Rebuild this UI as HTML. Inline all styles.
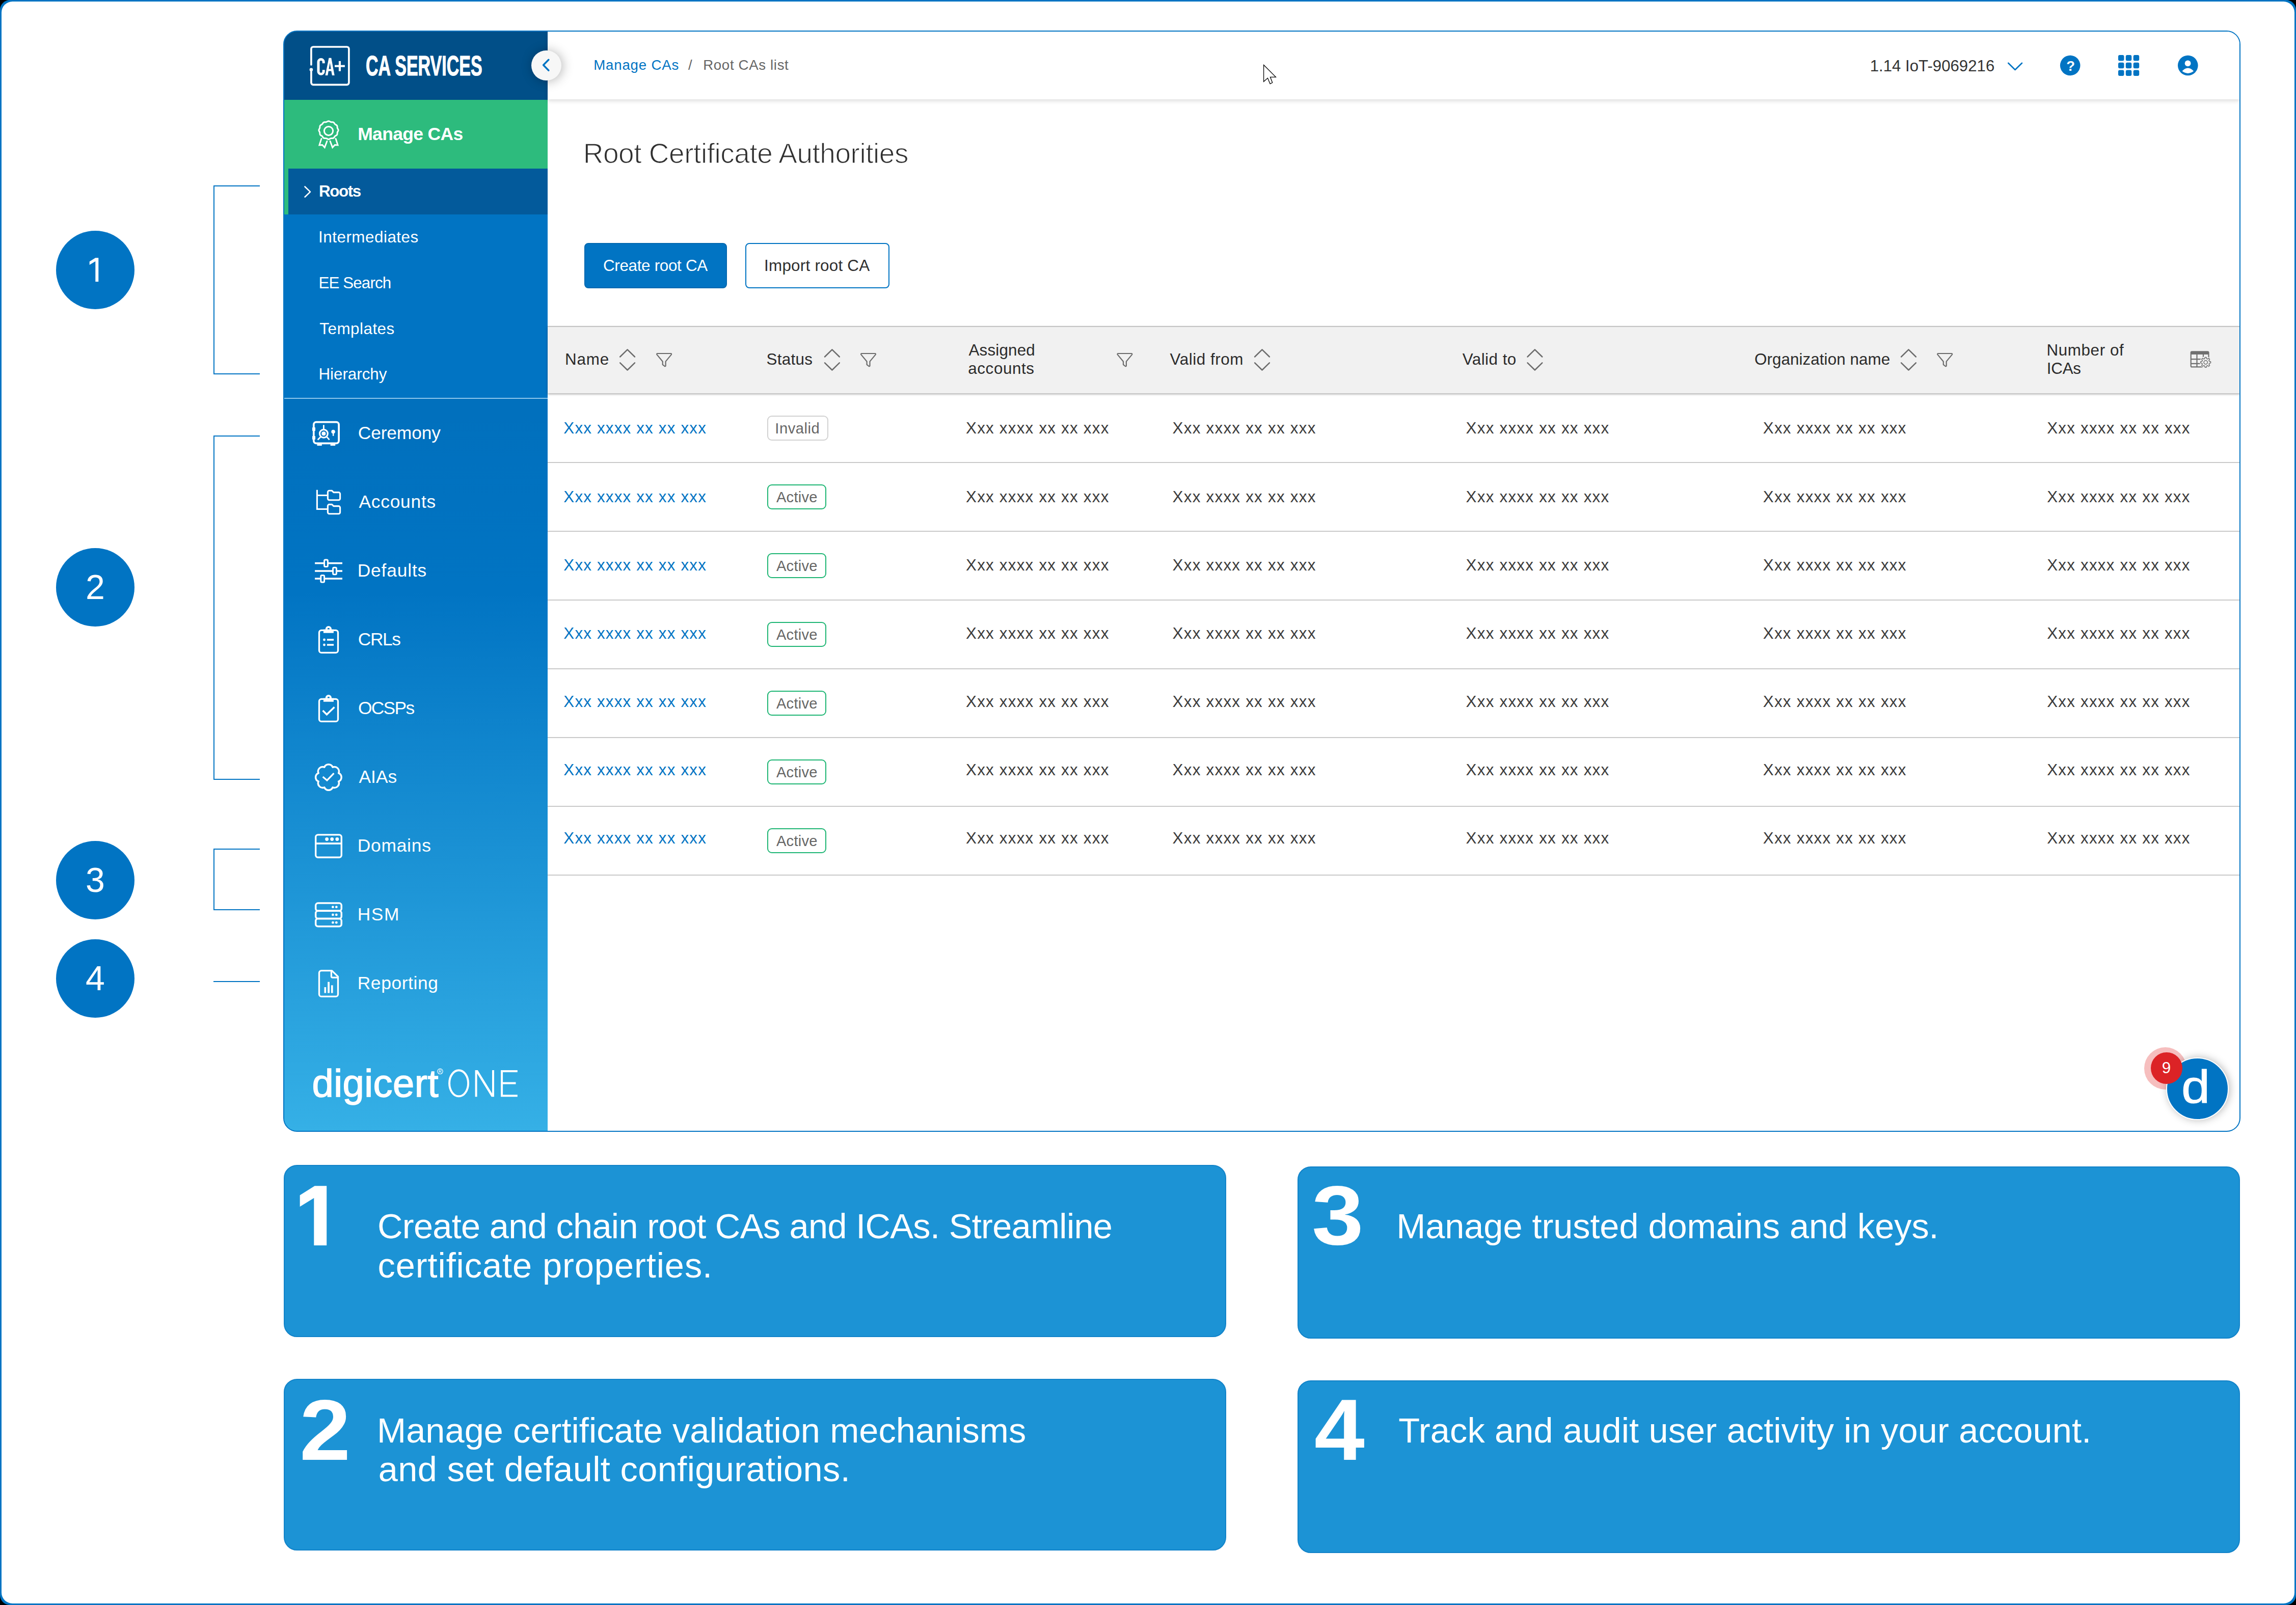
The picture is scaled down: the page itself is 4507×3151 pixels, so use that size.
<!DOCTYPE html>
<html><head><meta charset="utf-8"><title>CA Services</title>
<style>
html,body{margin:0;padding:0;}
body{width:4507px;height:3151px;background:#000;position:relative;overflow:hidden;font-family:"Liberation Sans",sans-serif;}
.b{position:absolute;box-sizing:border-box;}
.t{position:absolute;white-space:nowrap;}
svg{position:absolute;overflow:visible;}

</style></head>
<body>
<div class="b" style="left:0px;top:0px;width:4507px;height:3151px;background:#0174c3;border-radius:19.5px;"></div>
<div class="b" style="left:3px;top:3px;width:4501px;height:3145px;background:#fff;border-radius:21.5px;"></div>
<div class="b" style="left:110px;top:453px;width:154px;height:154px;border-radius:50%;background:#0174c3;"></div>
<svg style="left:0;top:0" width="300" height="700"><polygon fill="#fff" points="187.3,506.2 193.3,506.2 193.3,553 187.3,553 187.3,512.9 175.7,519.9 175.7,513.5"/></svg>
<div class="b" style="left:110px;top:1076px;width:154px;height:154px;border-radius:50%;background:#0174c3;"></div>
<div class="t " style="left:0px;top:1112.24px;font-size:68px;line-height:1.2;color:#fff;width:154px;left:110px;text-align:center;">2</div>
<div class="b" style="left:110px;top:1651px;width:154px;height:154px;border-radius:50%;background:#0174c3;"></div>
<div class="t " style="left:0px;top:1687.24px;font-size:68px;line-height:1.2;color:#fff;width:154px;left:110px;text-align:center;">3</div>
<div class="b" style="left:110px;top:1844px;width:154px;height:154px;border-radius:50%;background:#0174c3;"></div>
<div class="t " style="left:0px;top:1880.24px;font-size:68px;line-height:1.2;color:#fff;width:154px;left:110px;text-align:center;">4</div>
<div class="b" style="left:419.2px;top:364.3px;width:90.7px;height:370.49999999999994px;border:2.2px solid #0174c3;border-right:none;"></div>
<div class="b" style="left:419.2px;top:854.9px;width:90.7px;height:675.9px;border:2.2px solid #0174c3;border-right:none;"></div>
<div class="b" style="left:419.2px;top:1665.5px;width:90.7px;height:121.59999999999991px;border:2.2px solid #0174c3;border-right:none;"></div>
<div class="b" style="left:419.2px;top:1925.5px;width:90.7px;height:2.2px;background:#0174c3;"></div>
<div class="b" style="left:556px;top:60px;width:3842px;height:2162px;border:2px solid #0174c3;border-radius:27px;overflow:hidden;background:linear-gradient(#014f88,#014f88) 0 0/517px 134px no-repeat,linear-gradient(180deg,#0170bd 0px,#0170bd 750px,#0174c3 1100px,#35b0e6 2160px) 0 0/517px 100% no-repeat,#fff;"><div class="b" style="left:-558px;top:-62px;width:4507px;height:3151px;">
<div class="b" style="left:558px;top:62px;width:517px;height:2160px;background:linear-gradient(180deg,#0170bd 0px,#0170bd 750px,#0174c3 1100px,#35b0e6 2160px);"></div>
<div class="b" style="left:558px;top:62px;width:517px;height:134px;background:#014f88;"></div>
<div class="b" style="left:558px;top:196px;width:517px;height:135px;background:#2dbb7d;"></div>
<div class="b" style="left:558px;top:331px;width:517px;height:90px;background:#035a9b;"></div>
<div class="b" style="left:558px;top:331px;width:8px;height:90px;background:#2dbb7d;"></div>
<div class="b" style="left:558px;top:421px;width:517px;height:360px;background:#0174c3;"></div>
<div class="b" style="left:558px;top:781px;width:517px;height:2px;background:#8cc6ec;"></div>
<div class="t " style="left:718px;top:95.00px;font-size:56px;line-height:1.2;color:#fff;font-weight:700;transform:scaleX(0.607);transform-origin:0 0;-webkit-text-stroke:1.2px #fff;">CA SERVICES</div>
<div class="t " style="left:702.2px;top:242.30px;font-size:35.6px;line-height:1.2;color:#fff;font-weight:700;letter-spacing:-0.708px;">Manage CAs</div>
<div class="t " style="left:625.88px;top:357.28px;font-size:31.4px;line-height:1.2;color:#fff;font-weight:700;letter-spacing:-1.391px;">Roots</div>
<div class="t " style="left:625.1px;top:446.78px;font-size:31.4px;line-height:1.2;color:#fff;letter-spacing:0.493px;">Intermediates</div>
<div class="t " style="left:625.41px;top:536.68px;font-size:31.4px;line-height:1.2;color:#fff;letter-spacing:-0.905px;">EE Search</div>
<div class="t " style="left:627.29px;top:626.58px;font-size:31.4px;line-height:1.2;color:#fff;letter-spacing:0.488px;">Templates</div>
<div class="t " style="left:625.41px;top:716.48px;font-size:31.4px;line-height:1.2;color:#fff;letter-spacing:-0.04px;">Hierarchy</div>
<div class="t " style="left:702.83px;top:829.49px;font-size:35.4px;line-height:1.2;color:#fff;letter-spacing:-0.175px;">Ceremony</div>
<div class="t " style="left:704.51px;top:964.44px;font-size:35.4px;line-height:1.2;color:#fff;letter-spacing:0.735px;">Accounts</div>
<div class="t " style="left:701.68px;top:1099.39px;font-size:35.4px;line-height:1.2;color:#fff;letter-spacing:0.819px;">Defaults</div>
<div class="t " style="left:702.83px;top:1234.34px;font-size:35.4px;line-height:1.2;color:#fff;letter-spacing:-1.43px;">CRLs</div>
<div class="t " style="left:702.92px;top:1369.29px;font-size:35.4px;line-height:1.2;color:#fff;letter-spacing:-1.685px;">OCSPs</div>
<div class="t " style="left:704.51px;top:1504.24px;font-size:35.4px;line-height:1.2;color:#fff;letter-spacing:-0.018px;">AIAs</div>
<div class="t " style="left:701.68px;top:1639.19px;font-size:35.4px;line-height:1.2;color:#fff;letter-spacing:0.751px;">Domains</div>
<div class="t " style="left:701.68px;top:1774.14px;font-size:35.4px;line-height:1.2;color:#fff;letter-spacing:1.582px;">HSM</div>
<div class="t " style="left:701.68px;top:1909.09px;font-size:35.4px;line-height:1.2;color:#fff;letter-spacing:0.609px;">Reporting</div>
<div class="t " style="left:612.47px;top:2080.87px;font-size:76px;line-height:1.2;color:#fff;letter-spacing:0.456px;-webkit-text-stroke:1.5px #fff;">digicert</div>
<div class="b" style="left:1075px;top:62px;width:3322px;height:132.5px;background:#fff;box-shadow:0 3px 8px rgba(0,0,0,0.14);"></div>
<div class="t " style="left:1165.21px;top:111.08px;font-size:27.7px;line-height:1.2;color:#0174c3;letter-spacing:0.783px;">Manage CAs</div>
<div class="t " style="left:1351.0px;top:111.08px;font-size:27.7px;line-height:1.2;color:#666;">/</div>
<div class="t " style="left:1380.21px;top:111.08px;font-size:27.7px;line-height:1.2;color:#666;letter-spacing:0.632px;">Root CAs list</div>
<div class="t " style="left:3670.66px;top:110.87px;font-size:31.2px;line-height:1.2;color:#333;letter-spacing:0.004px;">1.14 IoT-9069216</div>
<div class="b" style="left:1043.1px;top:99.2px;width:58.8px;height:58.8px;border-radius:50%;background:#f7f7f7;box-shadow:2px 1px 22px rgba(0,0,0,0.3);"></div>
<div class="t " style="left:1144.66px;top:267.54px;font-size:55px;line-height:1.2;color:#303030;letter-spacing:-0.457px;-webkit-text-stroke:1.25px #fff;">Root Certificate Authorities</div>
<div class="b" style="left:1147.4px;top:477.4px;width:279.3px;height:89px;background:#0174c3;border-radius:8px;border:2px solid #0168b0;"></div>
<div class="t " style="left:1183.93px;top:502.88px;font-size:31.4px;line-height:1.2;color:#fff;letter-spacing:-0.315px;">Create root CA</div>
<div class="b" style="left:1463.3px;top:477.4px;width:282.7px;height:89px;background:#fff;border-radius:8px;border:2px solid #0174c3;"></div>
<div class="t " style="left:1500.1px;top:502.88px;font-size:31.4px;line-height:1.2;color:#2e2e2e;letter-spacing:0.231px;">Import root CA</div>
<div class="b" style="left:1075px;top:639.5px;width:3322px;height:132.3px;background:#f1f1f1;border-top:2px solid #c4c4c4;box-shadow:0 2px 4px rgba(0,0,0,0.32);"></div>
<div class="t " style="left:1109.01px;top:686.78px;font-size:31.4px;line-height:1.2;color:#2b2b2b;letter-spacing:0.855px;">Name</div>
<div class="t " style="left:1504.59px;top:686.78px;font-size:31.4px;line-height:1.2;color:#2b2b2b;letter-spacing:0.299px;">Status</div>
<div class="t " style="left:2296.54px;top:686.78px;font-size:31.4px;line-height:1.2;color:#2b2b2b;letter-spacing:0.553px;">Valid from</div>
<div class="t " style="left:2870.74px;top:686.78px;font-size:31.4px;line-height:1.2;color:#2b2b2b;letter-spacing:0.45px;">Valid to</div>
<div class="t " style="left:3443.91px;top:686.78px;font-size:31.4px;line-height:1.2;color:#2b2b2b;letter-spacing:0.067px;">Organization name</div>
<div class="t " style="left:1901.52px;top:668.58px;font-size:31.4px;line-height:1.2;color:#2b2b2b;letter-spacing:0.158px;">Assigned</div>
<div class="t " style="left:1900.27px;top:705.48px;font-size:31.4px;line-height:1.2;color:#2b2b2b;letter-spacing:0.594px;">accounts</div>
<div class="t " style="left:4017.61px;top:668.58px;font-size:31.4px;line-height:1.2;color:#2b2b2b;letter-spacing:0.569px;">Number of</div>
<div class="t " style="left:4017.7px;top:705.48px;font-size:31.4px;line-height:1.2;color:#2b2b2b;letter-spacing:-0.219px;">ICAs</div>
<div class="b" style="left:1075px;top:907.2px;width:3322px;height:2px;background:#c9c9c9;"></div>
<div class="t " style="left:1106.29px;top:822.48px;font-size:31.4px;line-height:1.2;color:#0174c3;letter-spacing:1.158px;">Xxx xxxx xx xx xxx</div>
<div class="t " style="left:1895.99px;top:822.48px;font-size:31.4px;line-height:1.2;color:#3c3c3c;letter-spacing:1.205px;">Xxx xxxx xx xx xxx</div>
<div class="t " style="left:2301.59px;top:822.48px;font-size:31.4px;line-height:1.2;color:#3c3c3c;letter-spacing:1.229px;">Xxx xxxx xx xx xxx</div>
<div class="t " style="left:2877.59px;top:822.48px;font-size:31.4px;line-height:1.2;color:#3c3c3c;letter-spacing:1.223px;">Xxx xxxx xx xx xxx</div>
<div class="t " style="left:3460.79px;top:822.48px;font-size:31.4px;line-height:1.2;color:#3c3c3c;letter-spacing:1.223px;">Xxx xxxx xx xx xxx</div>
<div class="t " style="left:4018.19px;top:822.48px;font-size:31.4px;line-height:1.2;color:#3c3c3c;letter-spacing:1.199px;">Xxx xxxx xx xx xxx</div>
<div class="b" style="left:1506px;top:816px;width:119.5px;height:48.8px;border:2px solid #d2d2d2;border-radius:9px;background:#fff;"></div>
<div class="t " style="left:1521.3px;top:823.96px;font-size:29.2px;line-height:1.2;color:#666;letter-spacing:0.523px;">Invalid</div>
<div class="b" style="left:1075px;top:1042.2px;width:3322px;height:2px;background:#c9c9c9;"></div>
<div class="t " style="left:1106.29px;top:956.55px;font-size:31.4px;line-height:1.2;color:#0174c3;letter-spacing:1.158px;">Xxx xxxx xx xx xxx</div>
<div class="t " style="left:1895.99px;top:956.55px;font-size:31.4px;line-height:1.2;color:#3c3c3c;letter-spacing:1.205px;">Xxx xxxx xx xx xxx</div>
<div class="t " style="left:2301.59px;top:956.55px;font-size:31.4px;line-height:1.2;color:#3c3c3c;letter-spacing:1.229px;">Xxx xxxx xx xx xxx</div>
<div class="t " style="left:2877.59px;top:956.55px;font-size:31.4px;line-height:1.2;color:#3c3c3c;letter-spacing:1.223px;">Xxx xxxx xx xx xxx</div>
<div class="t " style="left:3460.79px;top:956.55px;font-size:31.4px;line-height:1.2;color:#3c3c3c;letter-spacing:1.223px;">Xxx xxxx xx xx xxx</div>
<div class="t " style="left:4018.19px;top:956.55px;font-size:31.4px;line-height:1.2;color:#3c3c3c;letter-spacing:1.199px;">Xxx xxxx xx xx xxx</div>
<div class="b" style="left:1506px;top:951px;width:116px;height:48.8px;border:2.2px solid #1fb674;border-radius:9px;background:#fff;"></div>
<div class="t " style="left:1523.93px;top:958.96px;font-size:29.2px;line-height:1.2;color:#666;letter-spacing:0.223px;">Active</div>
<div class="b" style="left:1075px;top:1177.2px;width:3322px;height:2px;background:#c9c9c9;"></div>
<div class="t " style="left:1106.29px;top:1090.62px;font-size:31.4px;line-height:1.2;color:#0174c3;letter-spacing:1.158px;">Xxx xxxx xx xx xxx</div>
<div class="t " style="left:1895.99px;top:1090.62px;font-size:31.4px;line-height:1.2;color:#3c3c3c;letter-spacing:1.205px;">Xxx xxxx xx xx xxx</div>
<div class="t " style="left:2301.59px;top:1090.62px;font-size:31.4px;line-height:1.2;color:#3c3c3c;letter-spacing:1.229px;">Xxx xxxx xx xx xxx</div>
<div class="t " style="left:2877.59px;top:1090.62px;font-size:31.4px;line-height:1.2;color:#3c3c3c;letter-spacing:1.223px;">Xxx xxxx xx xx xxx</div>
<div class="t " style="left:3460.79px;top:1090.62px;font-size:31.4px;line-height:1.2;color:#3c3c3c;letter-spacing:1.223px;">Xxx xxxx xx xx xxx</div>
<div class="t " style="left:4018.19px;top:1090.62px;font-size:31.4px;line-height:1.2;color:#3c3c3c;letter-spacing:1.199px;">Xxx xxxx xx xx xxx</div>
<div class="b" style="left:1506px;top:1086px;width:116px;height:48.8px;border:2.2px solid #1fb674;border-radius:9px;background:#fff;"></div>
<div class="t " style="left:1523.93px;top:1093.96px;font-size:29.2px;line-height:1.2;color:#666;letter-spacing:0.223px;">Active</div>
<div class="b" style="left:1075px;top:1312.2px;width:3322px;height:2px;background:#c9c9c9;"></div>
<div class="t " style="left:1106.29px;top:1224.69px;font-size:31.4px;line-height:1.2;color:#0174c3;letter-spacing:1.158px;">Xxx xxxx xx xx xxx</div>
<div class="t " style="left:1895.99px;top:1224.69px;font-size:31.4px;line-height:1.2;color:#3c3c3c;letter-spacing:1.205px;">Xxx xxxx xx xx xxx</div>
<div class="t " style="left:2301.59px;top:1224.69px;font-size:31.4px;line-height:1.2;color:#3c3c3c;letter-spacing:1.229px;">Xxx xxxx xx xx xxx</div>
<div class="t " style="left:2877.59px;top:1224.69px;font-size:31.4px;line-height:1.2;color:#3c3c3c;letter-spacing:1.223px;">Xxx xxxx xx xx xxx</div>
<div class="t " style="left:3460.79px;top:1224.69px;font-size:31.4px;line-height:1.2;color:#3c3c3c;letter-spacing:1.223px;">Xxx xxxx xx xx xxx</div>
<div class="t " style="left:4018.19px;top:1224.69px;font-size:31.4px;line-height:1.2;color:#3c3c3c;letter-spacing:1.199px;">Xxx xxxx xx xx xxx</div>
<div class="b" style="left:1506px;top:1221px;width:116px;height:48.8px;border:2.2px solid #1fb674;border-radius:9px;background:#fff;"></div>
<div class="t " style="left:1523.93px;top:1228.96px;font-size:29.2px;line-height:1.2;color:#666;letter-spacing:0.223px;">Active</div>
<div class="b" style="left:1075px;top:1447.2px;width:3322px;height:2px;background:#c9c9c9;"></div>
<div class="t " style="left:1106.29px;top:1358.76px;font-size:31.4px;line-height:1.2;color:#0174c3;letter-spacing:1.158px;">Xxx xxxx xx xx xxx</div>
<div class="t " style="left:1895.99px;top:1358.76px;font-size:31.4px;line-height:1.2;color:#3c3c3c;letter-spacing:1.205px;">Xxx xxxx xx xx xxx</div>
<div class="t " style="left:2301.59px;top:1358.76px;font-size:31.4px;line-height:1.2;color:#3c3c3c;letter-spacing:1.229px;">Xxx xxxx xx xx xxx</div>
<div class="t " style="left:2877.59px;top:1358.76px;font-size:31.4px;line-height:1.2;color:#3c3c3c;letter-spacing:1.223px;">Xxx xxxx xx xx xxx</div>
<div class="t " style="left:3460.79px;top:1358.76px;font-size:31.4px;line-height:1.2;color:#3c3c3c;letter-spacing:1.223px;">Xxx xxxx xx xx xxx</div>
<div class="t " style="left:4018.19px;top:1358.76px;font-size:31.4px;line-height:1.2;color:#3c3c3c;letter-spacing:1.199px;">Xxx xxxx xx xx xxx</div>
<div class="b" style="left:1506px;top:1356px;width:116px;height:48.8px;border:2.2px solid #1fb674;border-radius:9px;background:#fff;"></div>
<div class="t " style="left:1523.93px;top:1363.96px;font-size:29.2px;line-height:1.2;color:#666;letter-spacing:0.223px;">Active</div>
<div class="b" style="left:1075px;top:1582.2px;width:3322px;height:2px;background:#c9c9c9;"></div>
<div class="t " style="left:1106.29px;top:1492.83px;font-size:31.4px;line-height:1.2;color:#0174c3;letter-spacing:1.158px;">Xxx xxxx xx xx xxx</div>
<div class="t " style="left:1895.99px;top:1492.83px;font-size:31.4px;line-height:1.2;color:#3c3c3c;letter-spacing:1.205px;">Xxx xxxx xx xx xxx</div>
<div class="t " style="left:2301.59px;top:1492.83px;font-size:31.4px;line-height:1.2;color:#3c3c3c;letter-spacing:1.229px;">Xxx xxxx xx xx xxx</div>
<div class="t " style="left:2877.59px;top:1492.83px;font-size:31.4px;line-height:1.2;color:#3c3c3c;letter-spacing:1.223px;">Xxx xxxx xx xx xxx</div>
<div class="t " style="left:3460.79px;top:1492.83px;font-size:31.4px;line-height:1.2;color:#3c3c3c;letter-spacing:1.223px;">Xxx xxxx xx xx xxx</div>
<div class="t " style="left:4018.19px;top:1492.83px;font-size:31.4px;line-height:1.2;color:#3c3c3c;letter-spacing:1.199px;">Xxx xxxx xx xx xxx</div>
<div class="b" style="left:1506px;top:1491px;width:116px;height:48.8px;border:2.2px solid #1fb674;border-radius:9px;background:#fff;"></div>
<div class="t " style="left:1523.93px;top:1498.96px;font-size:29.2px;line-height:1.2;color:#666;letter-spacing:0.223px;">Active</div>
<div class="b" style="left:1075px;top:1717.2px;width:3322px;height:2px;background:#c9c9c9;"></div>
<div class="t " style="left:1106.29px;top:1626.90px;font-size:31.4px;line-height:1.2;color:#0174c3;letter-spacing:1.158px;">Xxx xxxx xx xx xxx</div>
<div class="t " style="left:1895.99px;top:1626.90px;font-size:31.4px;line-height:1.2;color:#3c3c3c;letter-spacing:1.205px;">Xxx xxxx xx xx xxx</div>
<div class="t " style="left:2301.59px;top:1626.90px;font-size:31.4px;line-height:1.2;color:#3c3c3c;letter-spacing:1.229px;">Xxx xxxx xx xx xxx</div>
<div class="t " style="left:2877.59px;top:1626.90px;font-size:31.4px;line-height:1.2;color:#3c3c3c;letter-spacing:1.223px;">Xxx xxxx xx xx xxx</div>
<div class="t " style="left:3460.79px;top:1626.90px;font-size:31.4px;line-height:1.2;color:#3c3c3c;letter-spacing:1.223px;">Xxx xxxx xx xx xxx</div>
<div class="t " style="left:4018.19px;top:1626.90px;font-size:31.4px;line-height:1.2;color:#3c3c3c;letter-spacing:1.199px;">Xxx xxxx xx xx xxx</div>
<div class="b" style="left:1506px;top:1626px;width:116px;height:48.8px;border:2.2px solid #1fb674;border-radius:9px;background:#fff;"></div>
<div class="t " style="left:1523.93px;top:1633.96px;font-size:29.2px;line-height:1.2;color:#666;letter-spacing:0.223px;">Active</div>
<div class="b" style="left:4208.5px;top:2056px;width:83px;height:83px;border-radius:50%;background:rgba(226,40,40,0.3);"></div>
<div class="b" style="left:4252px;top:2075.5px;width:123px;height:123px;border-radius:50%;background:#0174c3;border:2px solid #fff;box-shadow:2px 0 16px rgba(0,0,0,0.28);"></div>
<div class="b" style="left:4221.9px;top:2066.4px;width:61.8px;height:61.8px;border-radius:50%;background:#dc2326;"></div>
<div class="t " style="left:4243.8px;top:2077.89px;font-size:31.5px;line-height:1.2;color:#fff;">9</div>
<div class="t " style="left:4282.2px;top:2080.41px;font-size:90px;line-height:1.2;color:#fff;-webkit-text-stroke:1px #fff;transform:scaleX(1.12);transform-origin:0 0;">d</div>
<svg style="left:0;top:0" width="4507" height="3151" viewBox="0 0 4507 3151"><path fill="none" stroke="#fff" stroke-linecap="round" stroke-linejoin="round" stroke-width="3.7" d="M610.9 127V96a4 4 0 0 1 4-4H680.9a4 4 0 0 1 4 4V162.3a4 4 0 0 1-4 4H614.9a4 4 0 0 1-4-4V138"/><circle cx="610.9" cy="136.8" r="3.3" fill="#fff"/><path fill="none" stroke="#fff" stroke-width="5" d="M635.2 124.2V121.6a5.1 5.1 0 0 0-10.2 0V140.2a5.1 5.1 0 0 0 10.2 0V137.3"/><path fill="#fff" fill-rule="evenodd" d="M638.5 148L645.5 113.7H650.3L656.7 148H651.9L650.3 139.4H644.8L643.3 148ZM645.5 135.6H649.7L647.6 123.5Z"/><rect x="664.9" y="119.9" width="4.1" height="19.8" fill="#fff"/><rect x="657" y="127.7" width="19.9" height="4" fill="#fff"/><polygon fill="none" stroke="#fff" stroke-linecap="round" stroke-linejoin="round" stroke-width="3" points="664.10,255.60 663.96,256.53 663.58,257.42 663.09,258.26 662.62,259.08 662.29,259.90 662.13,260.77 662.10,261.70 662.07,262.67 661.92,263.63 661.54,264.50 660.92,265.23 660.12,265.82 659.23,266.31 658.39,266.78 657.66,267.34 657.05,268.02 656.53,268.82 655.98,269.67 655.34,270.43 654.55,271.02 653.62,271.36 652.60,271.48 651.56,271.48 650.57,271.50 649.63,271.63 648.75,271.95 647.87,272.41 646.95,272.89 645.99,273.26 645.00,273.40 644.01,273.26 643.05,272.89 642.13,272.41 641.25,271.95 640.37,271.63 639.43,271.50 638.44,271.48 637.40,271.48 636.38,271.36 635.45,271.02 634.66,270.43 634.02,269.67 633.47,268.82 632.95,268.02 632.34,267.34 631.61,266.78 630.77,266.31 629.88,265.82 629.08,265.23 628.46,264.50 628.08,263.63 627.93,262.67 627.90,261.70 627.87,260.77 627.71,259.90 627.38,259.08 626.91,258.26 626.42,257.42 626.04,256.53 625.90,255.60 626.04,254.67 626.42,253.78 626.91,252.94 627.38,252.12 627.71,251.30 627.87,250.43 627.90,249.50 627.93,248.53 628.08,247.57 628.46,246.70 629.08,245.97 629.88,245.38 630.77,244.89 631.61,244.42 632.34,243.86 632.95,243.18 633.47,242.38 634.02,241.53 634.66,240.77 635.45,240.18 636.38,239.84 637.40,239.72 638.44,239.72 639.43,239.70 640.37,239.57 641.25,239.25 642.13,238.79 643.05,238.31 644.01,237.94 645.00,237.80 645.99,237.94 646.95,238.31 647.87,238.79 648.75,239.25 649.63,239.57 650.57,239.70 651.56,239.72 652.60,239.72 653.62,239.84 654.55,240.18 655.34,240.77 655.98,241.53 656.53,242.38 657.05,243.18 657.66,243.86 658.39,244.42 659.23,244.89 660.12,245.38 660.92,245.97 661.54,246.70 661.92,247.57 662.07,248.53 662.10,249.50 662.13,250.43 662.29,251.30 662.62,252.12 663.09,252.94 663.58,253.78 663.96,254.67 664.10,255.60"/><circle fill="none" stroke="#fff" stroke-linecap="round" stroke-linejoin="round" stroke-width="3" cx="645" cy="257.1" r="8.6"/><path fill="none" stroke="#fff" stroke-linecap="round" stroke-linejoin="miter" stroke-width="2.9" d="M630.9 272.4L626.9 284.9L632.7 284.6L637.3 289.6L641.9 277.2M659.1 272.4L663.1 284.9L657.3 284.6L652.7 289.6L648.1 277.2"/><path fill="none" stroke="#fff" stroke-linecap="round" stroke-linejoin="round" stroke-width="2.6" d="M598.5 366.5L609 376.6L598.5 386.7"/><rect fill="none" stroke="#fff" stroke-linecap="round" stroke-linejoin="round" stroke-width="3.7" x="615.8" y="828.6" width="49.3" height="41.7" rx="5"/><rect x="613" y="838.9" width="6" height="7.1" rx="1" fill="#fff"/><rect x="613" y="856" width="6" height="7" rx="1" fill="#fff"/><rect x="622.5" y="871.5" width="9.3" height="3.5" fill="#fff"/><rect x="648.6" y="871.5" width="9.6" height="3.5" fill="#fff"/><circle fill="none" stroke="#fff" stroke-linecap="round" stroke-linejoin="round" stroke-width="3.2" cx="635.4" cy="851.2" r="7.9"/><circle cx="635.4" cy="851.2" r="4" fill="#fff"/><path fill="none" stroke="#fff" stroke-linecap="butt" stroke-linejoin="round" stroke-width="2.8" d="M635.4 834.2V843M629.6 857.4L623.6 863.4M641.2 857.4L646.6 863.4"/><circle cx="654.1" cy="847.5" r="3.8" fill="#fff"/><rect x="652.9" y="849" width="2.5" height="6.8" fill="#fff"/><path fill="none" stroke="#fff" stroke-linecap="butt" stroke-linejoin="miter" stroke-width="3.1" d="M622.4 961.8V999.5H642M622.4 972.5H642"/><path fill="none" stroke="#fff" stroke-linecap="round" stroke-linejoin="round" stroke-width="3.1" d="M643.4 978.7V966.3a3 3 0 0 1 3-3H651.6L654.9 966.6H664.6a3 3 0 0 1 3 3V978.7a3 3 0 0 1-3 3H646.4a3 3 0 0 1-3-3Z"/><path fill="none" stroke="#fff" stroke-linecap="round" stroke-linejoin="round" stroke-width="3.1" d="M643.4 1005.75V993.3499999999999a3 3 0 0 1 3-3H651.6L654.9 993.65H664.6a3 3 0 0 1 3 3V1005.75a3 3 0 0 1-3 3H646.4a3 3 0 0 1-3-3Z"/><rect x="618.1" y="1103.95" width="53.9" height="3.5" fill="#fff"/><rect x="618.1" y="1119.25" width="53.9" height="3.5" fill="#fff"/><rect x="618.1" y="1134.25" width="53.9" height="3.5" fill="#fff"/><rect fill="none" stroke="#fff" stroke-linecap="round" stroke-linejoin="round" stroke-width="3" style="fill:#0174c3" x="636.6" y="1099.1" width="6.8" height="13.4" rx="2"/><rect fill="none" stroke="#fff" stroke-linecap="round" stroke-linejoin="round" stroke-width="3" style="fill:#0275c4" x="653.6" y="1114.3" width="6.8" height="13.4" rx="2"/><rect fill="none" stroke="#fff" stroke-linecap="round" stroke-linejoin="round" stroke-width="3" style="fill:#0376c4" x="629.8" y="1129.6" width="6.8" height="13.4" rx="2"/><rect fill="none" stroke="#fff" stroke-linecap="round" stroke-linejoin="round" stroke-width="3.3" x="626.5" y="1237.4" width="37" height="44" rx="4.5"/><rect x="634.9" y="1235.7" width="20" height="7" fill="#fff"/><circle fill="none" stroke="#fff" stroke-linecap="round" stroke-linejoin="round" stroke-width="3.9" cx="644.9" cy="1235" r="4.15"/><rect fill="none" stroke="#fff" stroke-linecap="round" stroke-linejoin="round" stroke-width="3.3" x="626.5" y="1372.4" width="37" height="44" rx="4.5"/><rect x="634.9" y="1370.7" width="20" height="7" fill="#fff"/><circle fill="none" stroke="#fff" stroke-linecap="round" stroke-linejoin="round" stroke-width="3.9" cx="644.9" cy="1370" r="4.15"/><circle cx="636.5" cy="1256" r="2.4" fill="#fff"/><rect x="641.9" y="1254.25" width="13.2" height="3.5" fill="#fff"/><circle cx="636.5" cy="1266" r="2.4" fill="#fff"/><rect x="641.9" y="1264.25" width="13.2" height="3.5" fill="#fff"/><path fill="none" stroke="#fff" stroke-linecap="butt" stroke-linejoin="miter" stroke-width="3.5" d="M633.6 1395L641.4 1402.8L656.4 1388.2"/><path fill="none" stroke="#fff" stroke-linecap="round" stroke-linejoin="round" stroke-width="3.5" d="M636.71 1506.23A8.84 8.84 0 0 1 653.09 1506.23A8.84 8.84 0 0 1 664.67 1517.81A8.84 8.84 0 0 1 664.67 1534.19A8.84 8.84 0 0 1 653.09 1545.77A8.84 8.84 0 0 1 636.71 1545.77A8.84 8.84 0 0 1 625.13 1534.19A8.84 8.84 0 0 1 625.13 1517.81A8.84 8.84 0 0 1 636.71 1506.23Z"/><path fill="none" stroke="#fff" stroke-linecap="butt" stroke-linejoin="miter" stroke-width="3.3" d="M633.7 1525.1L641.9 1532.1L655.4 1518.2"/><rect fill="none" stroke="#fff" stroke-linecap="round" stroke-linejoin="round" stroke-width="3.4" x="619.7" y="1638.9" width="50.6" height="44.4" rx="4.5"/><rect x="619.7" y="1654.2" width="50.6" height="3.6" fill="#fff"/><circle cx="641.6" cy="1647.5" r="3.4" fill="#fff"/><circle cx="651.7" cy="1647.5" r="3.4" fill="#fff"/><circle cx="661.8" cy="1647.5" r="3.4" fill="#fff"/><rect fill="none" stroke="#fff" stroke-linecap="round" stroke-linejoin="round" stroke-width="3.5" x="619.7" y="1773.1" width="50.6" height="15.2" rx="4.5"/><circle cx="653.4" cy="1780.6999999999998" r="2.4" fill="#fff"/><circle cx="660.3" cy="1780.6999999999998" r="2.4" fill="#fff"/><rect fill="none" stroke="#fff" stroke-linecap="round" stroke-linejoin="round" stroke-width="3.5" x="619.7" y="1788.35" width="50.6" height="15.2" rx="4.5"/><circle cx="653.4" cy="1795.9499999999998" r="2.4" fill="#fff"/><circle cx="660.3" cy="1795.9499999999998" r="2.4" fill="#fff"/><rect fill="none" stroke="#fff" stroke-linecap="round" stroke-linejoin="round" stroke-width="3.5" x="619.7" y="1803.6" width="50.6" height="15.2" rx="4.5"/><circle cx="653.4" cy="1811.1999999999998" r="2.4" fill="#fff"/><circle cx="660.3" cy="1811.1999999999998" r="2.4" fill="#fff"/><path fill="none" stroke="#fff" stroke-linecap="round" stroke-linejoin="round" stroke-width="3.3" d="M631 1905.6H651.5L663.5 1917.4V1951.9a4.5 4.5 0 0 1-4.5 4.5H631a4.5 4.5 0 0 1-4.5-4.5V1910.1a4.5 4.5 0 0 1 4.5-4.5Z"/><path fill="none" stroke="#fff" stroke-linecap="round" stroke-linejoin="round" stroke-width="3.3" d="M650.4 1906V1917a2.2 2.2 0 0 0 2.2 2.2H663.3"/><rect x="636.5" y="1938" width="3.6" height="11.5" fill="#fff"/><rect x="643.2" y="1927.7" width="3.8" height="21.8" fill="#fff"/><rect x="649.9" y="1934.3" width="3.7" height="15.2" fill="#fff"/><ellipse cx="900.6" cy="2126.8" rx="18.5" ry="25.5" fill="none" stroke="#fff" stroke-width="4"/><path fill="#fff" d="M932.6 2101H937.8L966 2146.8V2101H970V2153.3H964.8L936.6 2107.5V2153.3H932.6Z"/><path fill="none" stroke="#fff" stroke-width="4" d="M1015.8 2103H985.1V2151.3H1015.8M985.1 2126.6H1012.5"/><circle cx="864" cy="2103.3" r="5.2" fill="none" stroke="#fff" stroke-width="1.2"/><path fill="none" stroke="#fff" stroke-width="1" d="M862.2 2106.3V2100.3H864.6a1.6 1.6 0 0 1 0 3.2H862.2M864.4 2103.5L866 2106.3"/><path fill="none" stroke="#0174c3" stroke-width="3.4" stroke-linecap="round" stroke-linejoin="round" d="M1076.9 117.3L1066.6 127.8L1076.9 138.3"/><path fill="none" stroke="#0174c3" stroke-width="2.6" stroke-linecap="round" stroke-linejoin="round" d="M3942.2 123.8L3955.6 137L3969.1 123.8"/><circle cx="4063.7" cy="128.5" r="19.8" fill="#0174c3"/><rect x="4158" y="108.1" width="11.5" height="11.5" rx="3" fill="#0174c3"/><rect x="4158" y="122.8" width="11.5" height="11.5" rx="3" fill="#0174c3"/><rect x="4158" y="137.6" width="11.5" height="11.5" rx="3" fill="#0174c3"/><rect x="4172.8" y="108.1" width="11.5" height="11.5" rx="3" fill="#0174c3"/><rect x="4172.8" y="122.8" width="11.5" height="11.5" rx="3" fill="#0174c3"/><rect x="4172.8" y="137.6" width="11.5" height="11.5" rx="3" fill="#0174c3"/><rect x="4187.7" y="108.1" width="11.5" height="11.5" rx="3" fill="#0174c3"/><rect x="4187.7" y="122.8" width="11.5" height="11.5" rx="3" fill="#0174c3"/><rect x="4187.7" y="137.6" width="11.5" height="11.5" rx="3" fill="#0174c3"/><circle cx="4294.8" cy="128.5" r="19.8" fill="#0174c3"/><circle cx="4294.6" cy="124.3" r="5.9" fill="#fff"/><path fill="#fff" d="M4283.5 139.6Q4294.8 127.4 4306.1 139.6Q4294.8 148.3 4283.5 139.6Z"/><polygon fill="#fff" stroke="#000" stroke-width="1.3" points="2480.6,127.5 2504.4,151.3 2493.5,151.3 2497.7,162.3 2493.2,164.5 2488.4,153.3 2480.6,160.3"/><path fill="none" stroke="#6c6c6c" stroke-linecap="round" stroke-linejoin="round" stroke-width="2.5" d="M1217.1999999999998 700.5L1231.6 686.3L1246.0 700.5M1217.1999999999998 712.4L1231.6 726.5L1246.0 712.4"/><path fill="none" stroke="#6c6c6c" stroke-linecap="round" stroke-linejoin="round" stroke-width="2.5" d="M1619.0 700.5L1633.4 686.3L1647.8000000000002 700.5M1619.0 712.4L1633.4 726.5L1647.8000000000002 712.4"/><path fill="none" stroke="#6c6c6c" stroke-linecap="round" stroke-linejoin="round" stroke-width="2.5" d="M2463.1 700.5L2477.5 686.3L2491.9 700.5M2463.1 712.4L2477.5 726.5L2491.9 712.4"/><path fill="none" stroke="#6c6c6c" stroke-linecap="round" stroke-linejoin="round" stroke-width="2.5" d="M2998.5 700.5L3012.9 686.3L3027.3 700.5M2998.5 712.4L3012.9 726.5L3027.3 712.4"/><path fill="none" stroke="#6c6c6c" stroke-linecap="round" stroke-linejoin="round" stroke-width="2.5" d="M3732.1 700.5L3746.5 686.3L3760.9 700.5M3732.1 712.4L3746.5 726.5L3760.9 712.4"/><path fill="none" stroke="#6c6c6c" stroke-linecap="round" stroke-linejoin="round" stroke-width="2.2" d="M1290.45 694H1316.8500000000001a1.3 1.3 0 0 1 1 2.1L1306.65 709.6V718.0a1.2 1.2 0 0 1-1.9 1L1300.75 715.9V709.8L1289.45 696.1a1.3 1.3 0 0 1 1-2.1Z"/><path fill="none" stroke="#6c6c6c" stroke-linecap="round" stroke-linejoin="round" stroke-width="2.2" d="M1691.3 694H1717.7a1.3 1.3 0 0 1 1 2.1L1707.5 709.6V718.0a1.2 1.2 0 0 1-1.9 1L1701.6 715.9V709.8L1690.3 696.1a1.3 1.3 0 0 1 1-2.1Z"/><path fill="none" stroke="#6c6c6c" stroke-linecap="round" stroke-linejoin="round" stroke-width="2.2" d="M2194.7000000000003 694H2221.1a1.3 1.3 0 0 1 1 2.1L2210.9 709.6V718.0a1.2 1.2 0 0 1-1.9 1L2205.0 715.9V709.8L2193.7000000000003 696.1a1.3 1.3 0 0 1 1-2.1Z"/><path fill="none" stroke="#6c6c6c" stroke-linecap="round" stroke-linejoin="round" stroke-width="2.2" d="M3804.5 694H3830.8999999999996a1.3 1.3 0 0 1 1 2.1L3820.7 709.6V718.0a1.2 1.2 0 0 1-1.9 1L3814.7999999999997 715.9V709.8L3803.5 696.1a1.3 1.3 0 0 1 1-2.1Z"/><rect x="4300.7" y="690.4" width="34.8" height="30" rx="2" fill="none" stroke="#707070" stroke-width="2.2"/><rect x="4300.7" y="690.4" width="34.8" height="5.5" fill="#707070"/><path fill="none" stroke="#707070" stroke-width="2.2" d="M4312.5 691V720M4325 691V704M4300.7 705.2H4322M4300.7 713.8H4319"/><circle cx="4329.7" cy="711.3" r="11.6" fill="#f1f1f1"/><polygon fill="none" stroke="#707070" stroke-width="1.5" stroke-linejoin="round" points="4339.60,711.30 4339.59,711.82 4339.55,712.33 4339.19,712.80 4337.78,713.02 4336.75,713.19 4336.64,713.56 4336.52,713.92 4336.37,714.27 4336.20,714.61 4336.02,714.95 4336.63,715.80 4337.47,716.95 4337.39,717.53 4337.06,717.92 4336.70,718.30 4336.32,718.66 4335.93,718.99 4335.35,719.07 4334.20,718.23 4333.35,717.62 4333.01,717.80 4332.67,717.97 4332.32,718.12 4331.96,718.24 4331.59,718.35 4331.42,719.38 4331.20,720.79 4330.73,721.15 4330.22,721.19 4329.70,721.20 4329.18,721.19 4328.67,721.15 4328.20,720.79 4327.98,719.38 4327.81,718.35 4327.44,718.24 4327.08,718.12 4326.73,717.97 4326.39,717.80 4326.05,717.62 4325.20,718.23 4324.05,719.07 4323.47,718.99 4323.08,718.66 4322.70,718.30 4322.34,717.92 4322.01,717.53 4321.93,716.95 4322.77,715.80 4323.38,714.95 4323.20,714.61 4323.03,714.27 4322.88,713.92 4322.76,713.56 4322.65,713.19 4321.62,713.02 4320.21,712.80 4319.85,712.33 4319.81,711.82 4319.80,711.30 4319.81,710.78 4319.85,710.27 4320.21,709.80 4321.62,709.58 4322.65,709.41 4322.76,709.04 4322.88,708.68 4323.03,708.33 4323.20,707.99 4323.38,707.65 4322.77,706.80 4321.93,705.65 4322.01,705.07 4322.34,704.68 4322.70,704.30 4323.08,703.94 4323.47,703.61 4324.05,703.53 4325.20,704.37 4326.05,704.98 4326.39,704.80 4326.73,704.63 4327.08,704.48 4327.44,704.36 4327.81,704.25 4327.98,703.22 4328.20,701.81 4328.67,701.45 4329.18,701.41 4329.70,701.40 4330.22,701.41 4330.73,701.45 4331.20,701.81 4331.42,703.22 4331.59,704.25 4331.96,704.36 4332.32,704.48 4332.67,704.63 4333.01,704.80 4333.35,704.98 4334.20,704.37 4335.35,703.53 4335.93,703.61 4336.32,703.94 4336.70,704.30 4337.06,704.68 4337.39,705.07 4337.47,705.65 4336.63,706.80 4336.02,707.65 4336.20,707.99 4336.37,708.33 4336.52,708.68 4336.64,709.04 4336.75,709.41 4337.78,709.58 4339.19,709.80 4339.55,710.27 4339.59,710.78"/><circle cx="4329.7" cy="711.3" r="3.6" fill="none" stroke="#707070" stroke-width="1.5"/></svg>
<div class="t " style="left:4056.3px;top:112.57px;font-size:27.5px;line-height:1.2;color:#fff;font-weight:700;">?</div>
</div></div>
<div class="b" style="left:557px;top:2287px;width:1849.5px;height:338px;background:#1c93d5;border:2px solid #1283c9;border-radius:26px;"></div>
<div class="b" style="left:557px;top:2706.5px;width:1849.5px;height:337px;background:#1c93d5;border:2px solid #1283c9;border-radius:26px;"></div>
<div class="b" style="left:2546.6px;top:2290px;width:1850.6px;height:338.4px;background:#1c93d5;border:2px solid #1283c9;border-radius:26px;"></div>
<div class="b" style="left:2546.6px;top:2710px;width:1850.6px;height:338.9px;background:#1c93d5;border:2px solid #1283c9;border-radius:26px;"></div>
<svg style="left:0;top:0" width="4507" height="3151"><polygon fill="#fff" points="617.7,2328.2 641.2,2328.2 641.2,2445.1 616.3,2445.1 616.3,2352.1 588.7,2369.1 588.7,2346.4"/></svg>
<div class="t " style="left:587.69px;top:2707.61px;font-size:168.29px;line-height:1.2;color:#fff;font-weight:700;transform:scaleX(1.0714);transform-origin:0 0;">2</div>
<div class="t " style="left:2574.88px;top:2287.27px;font-size:165.63px;line-height:1.2;color:#fff;font-weight:700;transform:scaleX(1.1043);transform-origin:0 0;">3</div>
<div class="t " style="left:2580.34px;top:2705.26px;font-size:170.78px;line-height:1.2;color:#fff;font-weight:700;transform:scaleX(1.0397);transform-origin:0 0;">4</div>
<div class="t " style="left:740.98px;top:2367.16px;font-size:68.5px;line-height:1.2;color:#fff;letter-spacing:-0.678px;">Create and chain root CAs and ICAs. Streamline</div>
<div class="t " style="left:741.49px;top:2443.66px;font-size:68.5px;line-height:1.2;color:#fff;letter-spacing:0.947px;">certificate properties.</div>
<div class="t " style="left:740.05px;top:2767.56px;font-size:68.5px;line-height:1.2;color:#fff;letter-spacing:0.063px;">Manage certificate validation mechanisms</div>
<div class="t " style="left:742.79px;top:2843.66px;font-size:68.5px;line-height:1.2;color:#fff;letter-spacing:0.4px;">and set default configurations.</div>
<div class="t " style="left:2741.25px;top:2367.46px;font-size:68.5px;line-height:1.2;color:#fff;letter-spacing:-0.058px;">Manage trusted domains and keys.</div>
<div class="t " style="left:2745.36px;top:2768.16px;font-size:68.5px;line-height:1.2;color:#fff;letter-spacing:0.154px;">Track and audit user activity in your account.</div>
</body></html>
